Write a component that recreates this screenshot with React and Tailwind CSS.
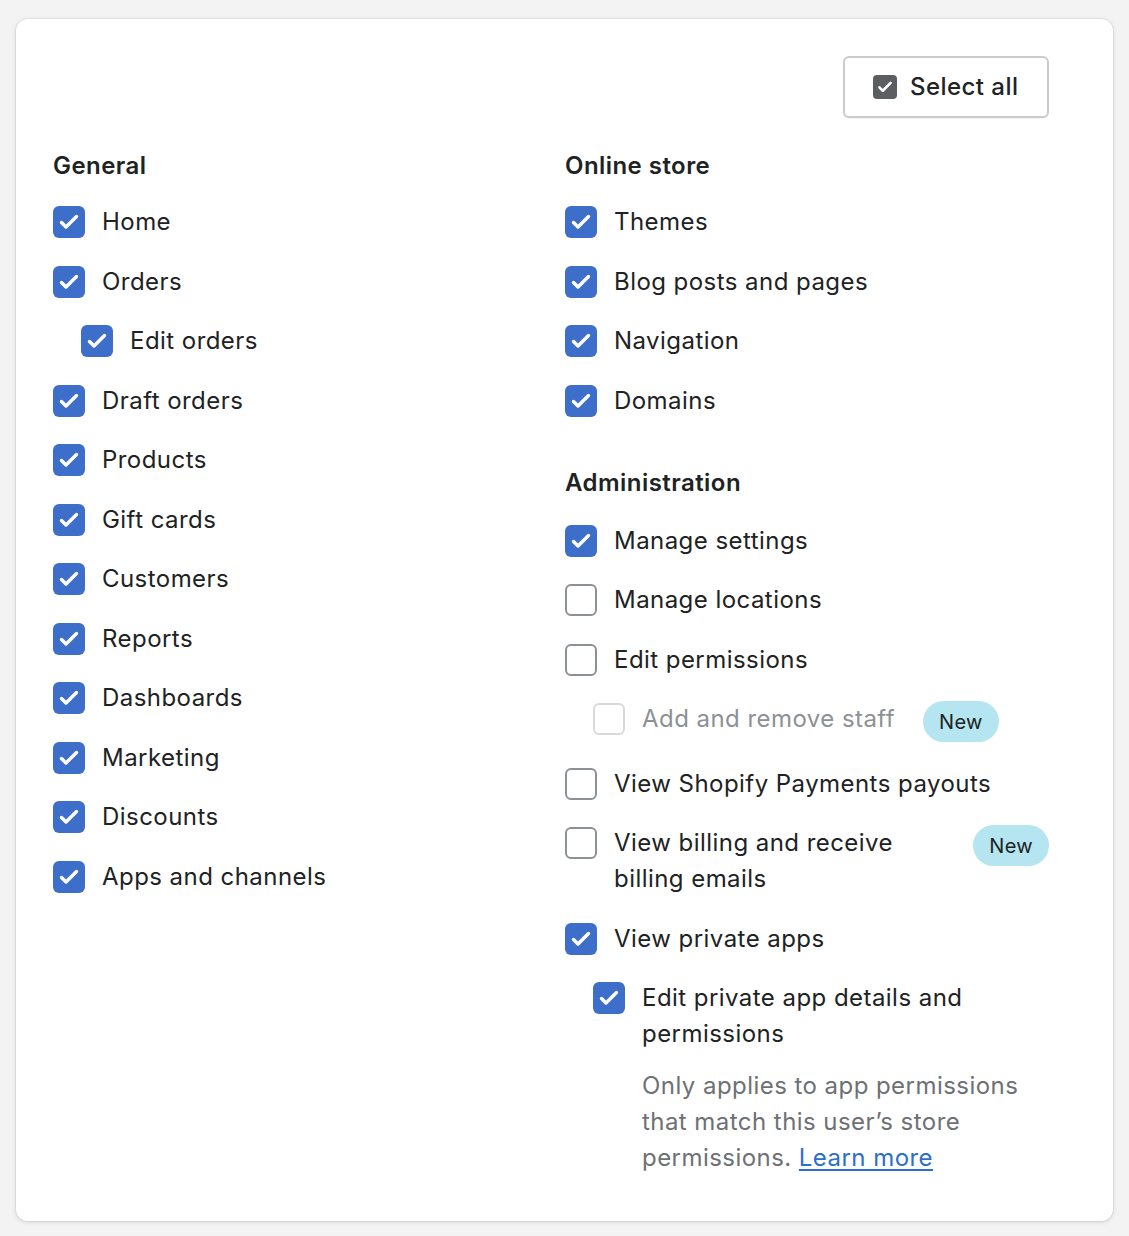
import { useState } from "react";

const CheckIcon = ({ size = 32 }) => (
    <svg width={size} height={size} viewBox="0 0 32 32" fill="none">
        <path d="M8.5 16.5l4.5 4.5L23.5 10.5" stroke="white" strokeWidth="3.4" strokeLinecap="round" strokeLinejoin="round" />
    </svg>
);

const Box = ({ checked, disabled }) => {
    if (checked) {
        return (
            <span className="mt-[2px] flex h-8 w-8 shrink-0 items-center justify-center rounded-[6px] bg-[#3d6fca]">
                <CheckIcon />
            </span>
        );
    }
    return (
        <span
            className={`mt-[2px] block h-8 w-8 shrink-0 rounded-[6px] border-2 bg-white ${
                disabled ? "border-[#d7d9dc]" : "border-[#8c9196]"
            }`}
        />
    );
};

const Badge = () => (
    <span className="ml-[28px] flex h-[41px] shrink-0 items-center rounded-full bg-[#b4e5f0] px-4 text-[20px] tracking-[0.3px] text-[#202223]">
        New
    </span>
);

const Item = ({ label, checked, nested, disabled, badge, children }) => (
    <div className={nested ? "pl-[28px]" : ""}>
        <div className="flex items-start">
            <Box checked={checked} disabled={disabled} />
            <span className={`ml-[17px] leading-9 ${disabled ? "text-[#8c9196]" : "text-[#202223]"}`}>{label}</span>
            {badge && <Badge />}
        </div>
        {children}
    </div>
);

const general = [
    { label: "Home" },
    { label: "Orders" },
    { label: "Edit orders", nested: true },
    { label: "Draft orders" },
    { label: "Products" },
    { label: "Gift cards" },
    { label: "Customers" },
    { label: "Reports" },
    { label: "Dashboards" },
    { label: "Marketing" },
    { label: "Discounts" },
    { label: "Apps and channels" },
];

const onlineStore = ["Themes", "Blog posts and pages", "Navigation", "Domains"];

export default function App() {
    const [all] = useState(true);

    return (
        <div className="min-h-[1236px] bg-[#f3f3f3] px-4 pt-[19px] pb-[15px] font-['Inter','Liberation_Sans',sans-serif] text-[24px] tracking-[0.45px] text-[#202223]">
            <div className="rounded-[12px] bg-white pl-[37px] pr-16 pt-[37px] pb-[45px] shadow-[0_0_0_1px_rgba(63,63,68,0.05),0_1px_4px_rgba(63,63,68,0.18)]">
                <div className="flex justify-end">
                    <button className="flex h-[62px] w-[206px] items-center gap-[13px] rounded-[6px] border-2 border-[#c9cccf] bg-white pl-[28px] shadow-[0_1px_0_rgba(0,0,0,0.05)]">
                        <span className="flex h-6 w-6 items-center justify-center rounded-[4px] bg-[#5c5f62]">
                            {all && <CheckIcon size={24} />}
                        </span>
                        <span className="font-medium">Select all</span>
                    </button>
                </div>

                <div className="mt-[30px] flex">
                    <div className="w-[512px] shrink-0">
                        <h2 className="font-semibold leading-9">General</h2>
                        <div className="mt-5 flex flex-col gap-[23.5px]">
                            {general.map((g) => (
                                <Item key={g.label} label={g.label} nested={g.nested} checked />
                            ))}
                        </div>
                    </div>

                    <div className="flex-1">
                        <h2 className="font-semibold leading-9">Online store</h2>
                        <div className="mt-5 flex flex-col gap-[23.5px]">
                            {onlineStore.map((l) => (
                                <Item key={l} label={l} checked />
                            ))}
                        </div>

                        <h2 className="mt-[46px] font-semibold leading-9">Administration</h2>
                        <div className="mt-[22px] flex flex-col gap-[23.5px]">
                            <Item label="Manage settings" checked />
                            <Item label="Manage locations" />
                            <Item label="Edit permissions" />
                            <Item label="Add and remove staff" nested disabled badge />
                            <Item label="View Shopify Payments payouts" />
                            <Item label="View billing and receive billing emails" badge />
                            <Item label="View private apps" checked />
                            <Item label="Edit private app details and permissions" nested checked>
                                <p className="mt-4 pl-[49px] leading-9 text-[#6d7175]">
                                    Only applies to app permissions that match this user’s store permissions.{" "}
                                    <a href="#" className="text-[#2c6ecb] underline underline-offset-[3px]">Learn more</a>
                                </p>
                            </Item>
                        </div>
                    </div>
                </div>
            </div>
        </div>
    );
}
